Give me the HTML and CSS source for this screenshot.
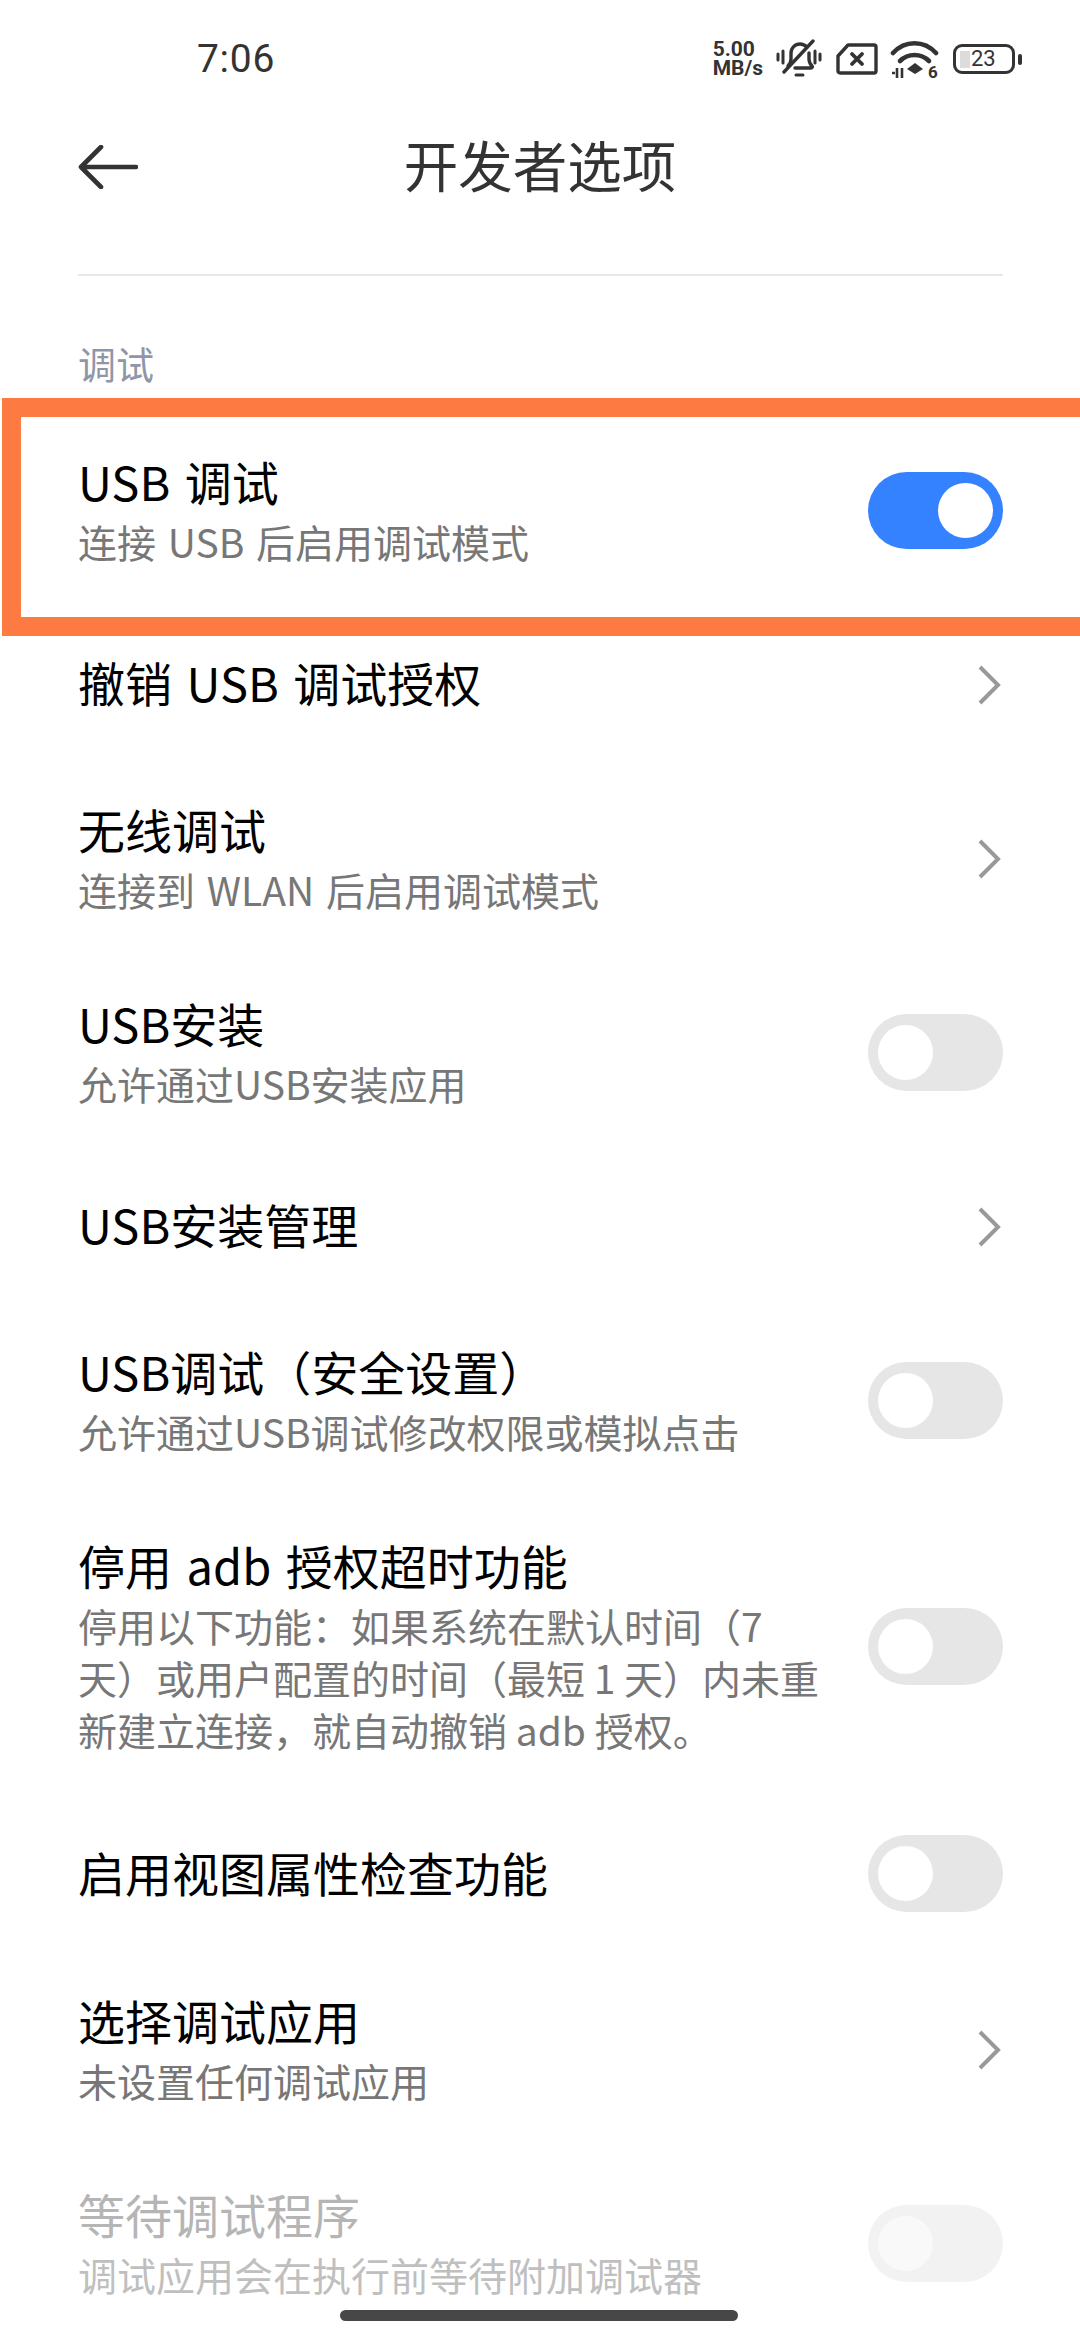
FILE: index.html
```html
<!DOCTYPE html>
<html lang="zh-CN">
<head>
<meta charset="utf-8">
<title>开发者选项</title>
<link rel="stylesheet" href="styles.css">
</head>
<body>
<div class="screen">
  <div class="status">
    <span class="time">7:06</span>
    <div class="status-icons">
      <div class="speed"><span>5.00</span><span>MB/s</span></div>
      <svg class="ic-bell" width="46" height="40" viewBox="0 0 46 40" fill="none" stroke="#333" stroke-width="3.4" stroke-linecap="round" stroke-linejoin="round">
        <path d="M12 27c2-2 3-4 3-7v-6c0-5 4-9 9-9 3 0 5 1 7 3"/><path d="M33 14v6c0 3 1 5 3 7 1 1 0 2-1 2H19"/>
        <path d="M8 33 37 2"/><path d="M20 36h7" stroke-width="3"/>
        <path d="M2 15v6M7 12v12M39 12v12M44 15v6" stroke-width="3"/>
      </svg>
      <svg class="ic-sim" width="42" height="32" viewBox="0 0 42 32" fill="none" stroke="#333" stroke-width="3.4" stroke-linejoin="round" stroke-linecap="round">
        <path d="M2 13 12 2h26a2 2 0 0 1 2 2v24a2 2 0 0 1-2 2H4a2 2 0 0 1-2-2z"/>
        <path d="M16 11l10 10M26 11 16 21" stroke-width="3.8"/>
      </svg>
      <svg class="ic-wifi" width="50" height="46" viewBox="0 -4 50 46" fill="none" stroke="#333" stroke-linecap="round">
        <path d="M3 13C15 0 34 0 46 13" stroke-width="4.6"/>
        <path d="M10 21c8-8 21-8 29 0" stroke-width="4.6"/>
        <path d="M25 23l8 6-8 5-8-5z" fill="#333" stroke="none"/>
        <path d="M2 33h3M7 28v10M12 28v10" stroke-width="2.6" stroke-linecap="butt"/>
        <text class="wifi-six" x="38" y="38">6</text>
      </svg>
      <div class="battery">
        <div class="bat-body"><span class="bat-fill"></span><span class="bat-num">23</span></div>
        <span class="bat-nib"></span>
      </div>
    </div>
  </div>

  <div class="nav">
    <svg class="back" width="60" height="44" viewBox="0 0 60 44" fill="none" stroke="#333" stroke-width="4.6" stroke-linecap="round" stroke-linejoin="round">
      <path d="M58 22H3M23 2 3 22l20 20"/>
    </svg>
    <h1 class="nav-title">开发者选项</h1>
  </div>
  <div class="divider"></div>
  <div class="section">调试</div>

  <div class="list">
    <div class="row">
      <div class="texts"><div class="t">USB 调试</div><div class="s">连接 USB 后启用调试模式</div></div>
      <div class="switch on"><span class="knob"></span></div>
    </div>
    <div class="row">
      <div class="texts"><div class="t">撤销 USB 调试授权</div></div>
      <svg class="chev" width="26" height="44" viewBox="0 0 26 44" fill="none" stroke="#999" stroke-width="4"><path d="M4 4l18 18L4 40"/></svg>
    </div>
    <div class="row">
      <div class="texts"><div class="t">无线调试</div><div class="s">连接到 WLAN 后启用调试模式</div></div>
      <svg class="chev" width="26" height="44" viewBox="0 0 26 44" fill="none" stroke="#999" stroke-width="4"><path d="M4 4l18 18L4 40"/></svg>
    </div>
    <div class="row">
      <div class="texts"><div class="t">USB安装</div><div class="s">允许通过USB安装应用</div></div>
      <div class="switch"><span class="knob"></span></div>
    </div>
    <div class="row">
      <div class="texts"><div class="t">USB安装管理</div></div>
      <svg class="chev" width="26" height="44" viewBox="0 0 26 44" fill="none" stroke="#999" stroke-width="4"><path d="M4 4l18 18L4 40"/></svg>
    </div>
    <div class="row">
      <div class="texts"><div class="t">USB调试&#xFF08;安全设置&#xFF09;</div><div class="s">允许通过USB调试修改权限或模拟点击</div></div>
      <div class="switch"><span class="knob"></span></div>
    </div>
    <div class="row">
      <div class="texts"><div class="t">停用 adb 授权超时功能</div><div class="s tight">停用以下功能&#xFF1A;如果系统在默认时间&#xFF08;7<br>天&#xFF09;或用户配置的时间&#xFF08;最短 1 天&#xFF09;内未重<br>新建立连接&#xFF0C;就自动撤销 adb 授权&#x3002;</div></div>
      <div class="switch"><span class="knob"></span></div>
    </div>
    <div class="row">
      <div class="texts"><div class="t">启用视图属性检查功能</div></div>
      <div class="switch"><span class="knob"></span></div>
    </div>
    <div class="row">
      <div class="texts"><div class="t">选择调试应用</div><div class="s">未设置任何调试应用</div></div>
      <svg class="chev" width="26" height="44" viewBox="0 0 26 44" fill="none" stroke="#999" stroke-width="4"><path d="M4 4l18 18L4 40"/></svg>
    </div>
    <div class="row disabled">
      <div class="texts"><div class="t">等待调试程序</div><div class="s">调试应用会在执行前等待附加调试器</div></div>
      <div class="switch"><span class="knob"></span></div>
    </div>
  </div>

  <div class="highlight"></div>
  <div class="home-bar"></div>
</div>
</body>
</html>
```
FILE: styles.css
```css
* { box-sizing: border-box; }
html, body { margin: 0; padding: 0; background: #fff; }
body { font-family: "Noto Sans CJK SC", "Noto Sans", sans-serif; color: #000; }
.screen { position: relative; width: 1080px; height: 2340px; overflow: hidden; background: #fff; }

.status { height: 118px; display: flex; align-items: center; justify-content: space-between; padding: 0 58px 0 197px; }
.time { font-family: "Roboto", sans-serif; font-size: 39px; color: #333; letter-spacing: 0.7px; }
.status-icons { display: flex; align-items: center; gap: 12px; }
.speed { display: flex; flex-direction: column; margin-right: 1px; font-family: "Roboto", sans-serif; font-weight: 700; font-size: 21px; line-height: 19px; color: #333; }
.ic-sim { margin-left: 2px; }
.wifi-six { font-family: "Roboto", sans-serif; font-weight: 700; font-size: 17px; fill: #333; stroke: none; }
.battery { display: flex; align-items: center; gap: 3px; margin-left: 1px; }
.bat-body { width: 62px; height: 30px; border: 3.4px solid #333; border-radius: 9px; display: flex; align-items: center; padding-left: 4px; }
.bat-fill { width: 10px; height: 17px; background: #dcdcdc; }
.bat-num { font-family: "Roboto", sans-serif; font-size: 22px; line-height: 22px; color: #333; margin-left: 1px; }
.bat-nib { width: 4px; height: 11px; background: #333; border-radius: 2px; }

.nav { position: relative; height: 98px; display: flex; align-items: center; justify-content: center; }
.back { position: absolute; left: 78px; top: 27px; }
.nav-title { margin: 0 0 6px; font-size: 54.5px; font-weight: 400; line-height: 70px; color: #333; }
.divider { height: 2px; margin: 58px 77px 0 78px; background: #e8e8e8; }
.section { margin-top: 62px; padding: 0 78px 27px; font-size: 38px; line-height: 50px; color: #8f96a8; }

.row { display: flex; align-items: center; justify-content: space-between; min-height: 154px; padding: 40px 77px 40px 78px; }
.texts { width: 750px; }
.t { font-size: 47px; line-height: 52px; padding-bottom: 8px; color: #000; word-spacing: 4px; }
.s { margin-bottom: 2px; font-size: 39px; line-height: 52px; color: #777; word-spacing: 3px; }
.s.tight { word-spacing: 0; }
.chev { margin: 0 1px 3px 0; flex: none; }
.switch { flex: none; width: 135px; height: 77px; margin: -2px 0 2px; padding: 11px 10px; border-radius: 39px; background: #e6e6e6; display: flex; }
.switch.on { background: #3482ff; justify-content: flex-end; }
.knob { width: 55px; height: 55px; border-radius: 50%; background: #fff; }
.disabled .t { color: #b5b5b5; }
.disabled .s { color: #bfbfbf; }
.disabled .switch { background: #f2f2f2; }
.disabled .knob { background: #f9f9f9; }

.highlight { position: absolute; left: 2px; right: -30px; top: 398px; height: 238px; border: 19px solid #fe7a43; pointer-events: none; }
.home-bar { position: absolute; left: 340px; top: 2310px; width: 398px; height: 11px; border-radius: 6px; background: #474747; }
```
